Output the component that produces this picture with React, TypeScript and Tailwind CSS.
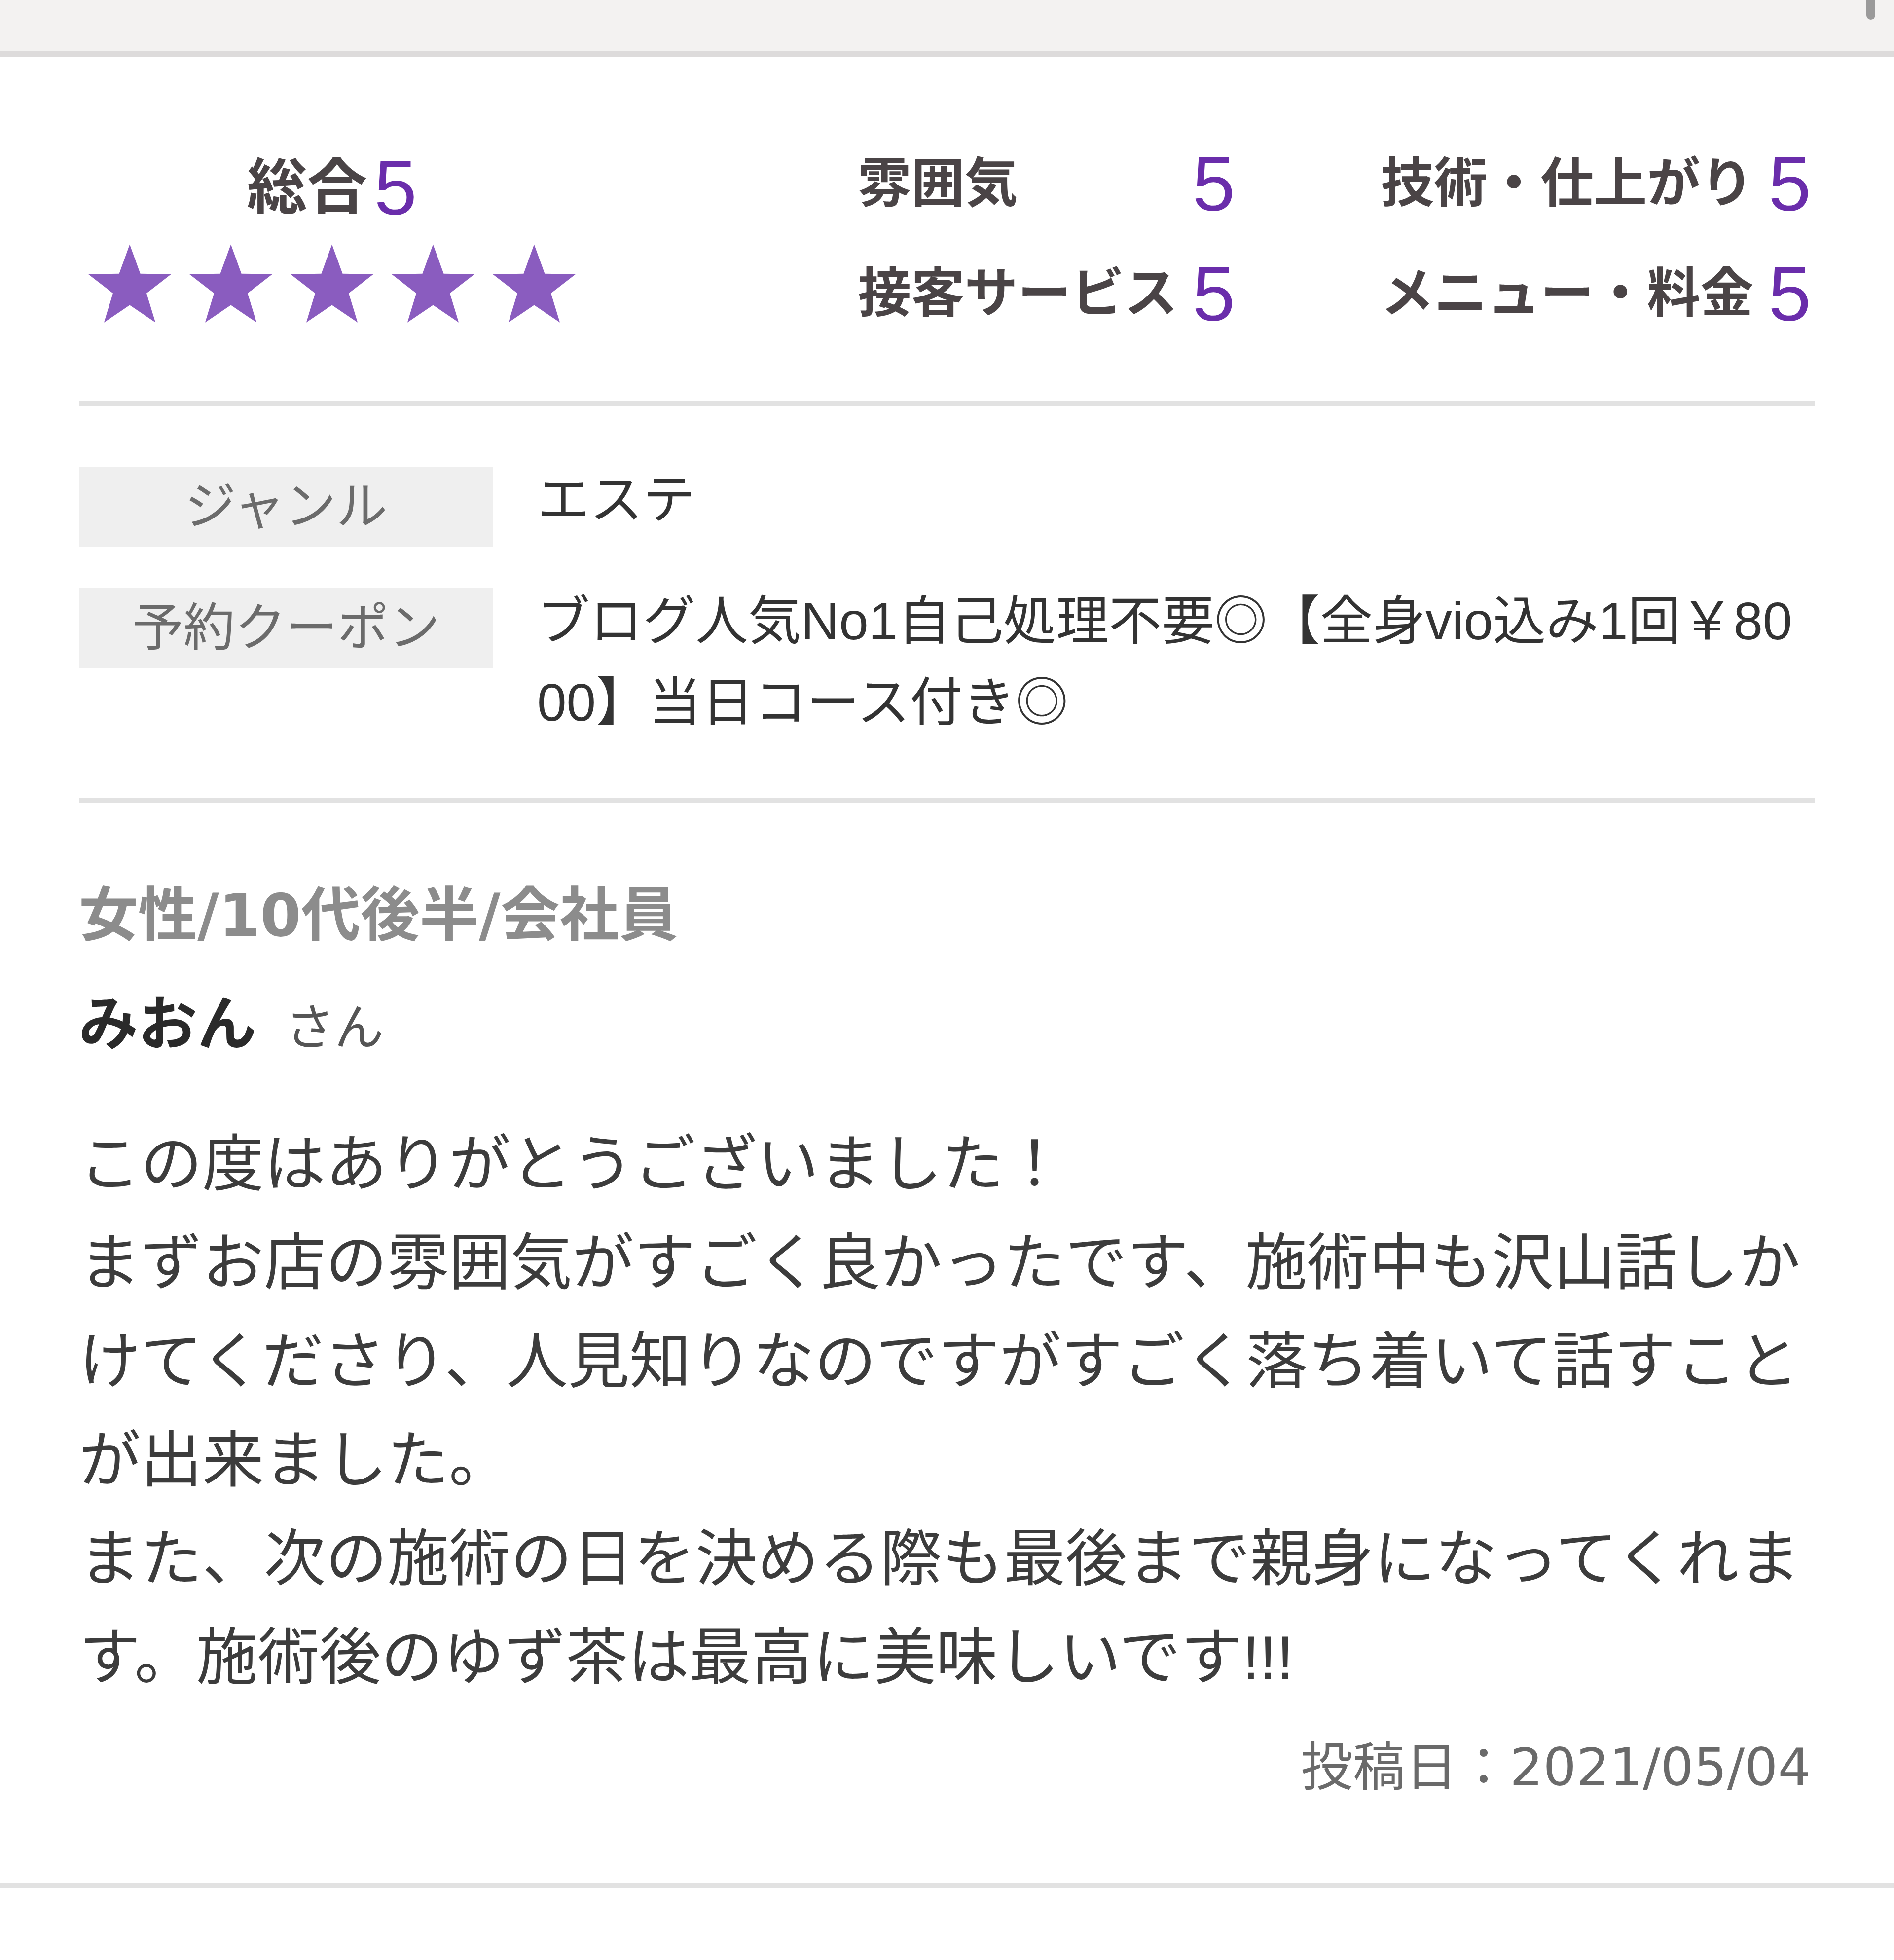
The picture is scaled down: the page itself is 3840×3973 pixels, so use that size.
import React from 'react';

const FONT = '"Liberation Sans", "Noto Sans CJK JP", sans-serif';
const WIDE_FONT = '"DejaVu Sans", "Noto Sans CJK JP", sans-serif';

const scores = [
  [
    { label: '雰囲気', value: 5 },
    { label: '接客サービス', value: 5 },
  ],
  [
    { label: '技術・仕上がり', value: 5 },
    { label: 'メニュー・料金', value: 5 },
  ],
];

const reviewLines = [
  'この度はありがとうございました！',
  'まずお店の雰囲気がすごく良かったです、施術中も沢山話しかけてくださり、人見知りなのですがすごく落ち着いて話すことが出来ました。',
  'また、次の施術の日を決める際も最後まで親身になってくれます。施術後のゆず茶は最高に美味しいです!!!',
];

const Star: React.FC = () => (
  <svg width="172" height="168" viewBox="0 0 100 96" className="block">
    <polygon
      fill="#8a5cbf"
      points="50,0 62.5,34.5 98.9,35.1 69.8,57.6 80.3,92.1 50,71.5 19.7,92.1 30.2,57.6 1.1,35.1 37.5,34.5"
    />
  </svg>
);

const InfoRow: React.FC<{ label: string; children: React.ReactNode }> = ({ label, children }) => (
  <div className="flex items-start">
    <div className="flex h-[162px] w-[840px] shrink-0 items-center justify-center bg-[#efefef] text-[104px] text-[#6b6b6b]">
      {label}
    </div>
    <div className="-mt-[15px] ml-[89px] flex-1 break-all text-[107px] leading-[165px] text-[#333333]">
      {children}
    </div>
  </div>
);

export default function App() {
  return (
    <div className="relative min-h-[3973px] bg-white" style={{ fontFamily: FONT }}>
      {/* browser chrome strip */}
      <div className="h-[103px] bg-[#f3f2f1]" />
      <div className="h-[12px] bg-[#dddbdb]" />
      <div className="absolute right-[38px] top-0 h-[40px] w-[18px] rounded-b-full bg-[#9a9a9a]" />

      <main className="px-[160px]">
        {/* ratings */}
        <section className="flex items-start border-b-[10px] border-[#e2e2e2] pb-[142px] pt-[182px]">
          <div className="ml-[17px] mt-[8px] flex flex-col">
            <div className="flex h-[150px] items-center justify-center">
              <span className="text-[122px] font-bold leading-none text-[#4a4446]">総合</span>
              <span className="ml-[14px] text-[156px] leading-none text-[#6a2dab]">5</span>
            </div>
            <div className="mt-[39px] flex gap-[33px]">
              {[0, 1, 2, 3, 4].map((i) => (
                <Star key={i} />
              ))}
            </div>
          </div>

          <div className="ml-auto mr-[8px] flex gap-[295px]">
            {scores.map((col, ci) => (
              <div key={ci} className="grid grid-cols-[auto_auto] gap-x-[30px] gap-y-[73px]">
                {col.map((s) => (
                  <React.Fragment key={s.label}>
                    <div className="flex h-[150px] items-center text-[108px] font-bold text-[#4a4446]">
                      {s.label}
                    </div>
                    <div className="flex h-[150px] items-center text-[156px] leading-none text-[#6a2dab]">
                      {s.value}
                    </div>
                  </React.Fragment>
                ))}
              </div>
            ))}
          </div>
        </section>

        {/* genre / coupon */}
        <section className="flex flex-col gap-[84px] border-b-[10px] border-[#e2e2e2] pb-[110px] pt-[124px]">
          <InfoRow label="ジャンル">エステ</InfoRow>
          <InfoRow label="予約クーポン">ブログ人気No1自己処理不要◎【全身vio込み1回￥8000】当日コース付き◎</InfoRow>
        </section>

        {/* review */}
        <section className="pb-[159px] pt-[154px]">
          <div
            className="h-[150px] text-[120px] font-bold leading-[150px] text-[#8c8c8c]"
            style={{ fontFamily: WIDE_FONT }}
          >
            女性/10代後半/会社員
          </div>
          <div className="mt-[70px] flex h-[150px] items-baseline leading-[150px]">
            <span className="text-[120px] font-bold text-[#2a2a2a]">みおん</span>
            <span className="ml-[58px] text-[100px] text-[#555555]">さん</span>
          </div>
          <div className="mt-[109px] text-[125px] leading-[200px] text-[#3c3c3c]">
            {reviewLines.map((line, i) => (
              <p key={i}>{line}</p>
            ))}
          </div>
          <div
            className="mt-[48px] pr-[8px] text-right text-[106px] leading-[150px] text-[#6a6a6a]"
            style={{ fontFamily: WIDE_FONT }}
          >
            投稿日：2021/05/04
          </div>
        </section>
      </main>

      <div className="h-[10px] bg-[#e2e2e2]" />
    </div>
  );
}
